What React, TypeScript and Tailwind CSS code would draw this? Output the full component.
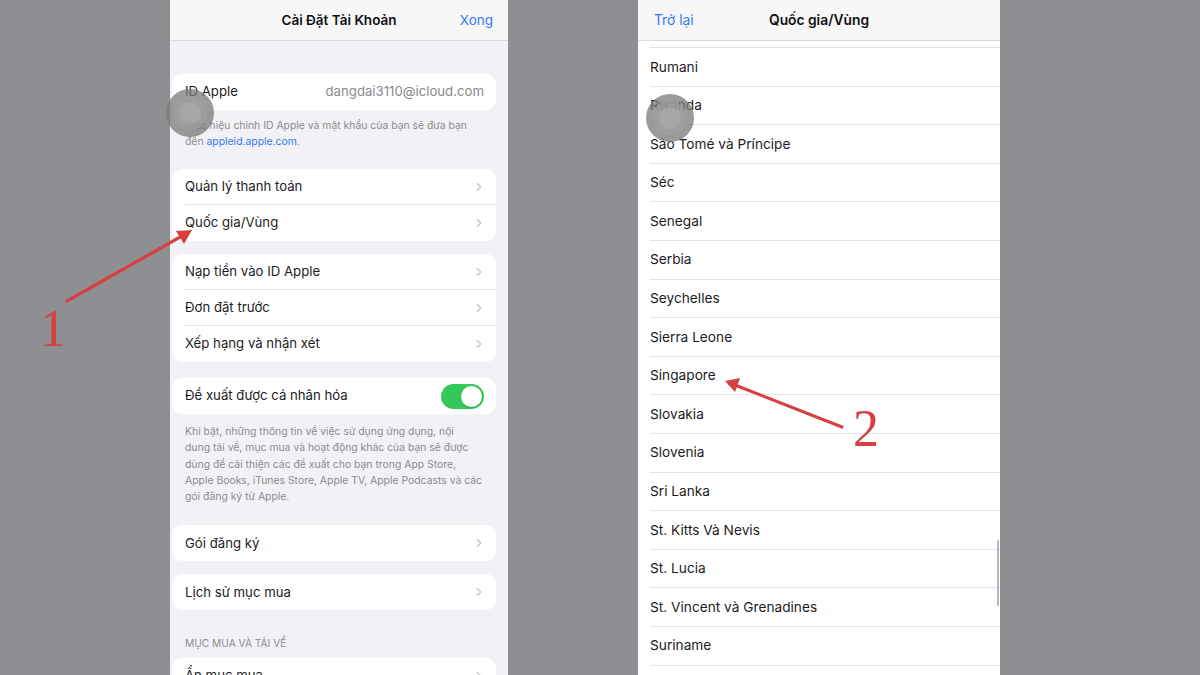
import { ChevronRight } from 'lucide-react';

const font = { fontFamily: 'Inter, "Noto Sans", sans-serif' };

const countries = [
  'Rumani',
  'Rwanda',
  'São Tomé và Príncipe',
  'Séc',
  'Senegal',
  'Serbia',
  'Seychelles',
  'Sierra Leone',
  'Singapore',
  'Slovakia',
  'Slovenia',
  'Sri Lanka',
  'St. Kitts Và Nevis',
  'St. Lucia',
  'St. Vincent và Grenadines',
  'Suriname',
];

function Row({ label, last }: { label: string; last?: boolean }) {
  return (
    <div className="pl-[13px] h-9">
      <div
        className={`h-full flex items-center justify-between pr-[10px] ${
          last ? '' : 'border-b border-[#e4e4e8]'
        }`}
      >
        <span className="text-[13.2px] text-[#1c1c1e]">{label}</span>
        <ChevronRight className="w-[14px] h-[14px] text-[#c2c2c6]" strokeWidth={2} />
      </div>
    </div>
  );
}

function Card({ children, className = '' }: { children: React.ReactNode; className?: string }) {
  return (
    <div className={`shrink-0 ml-[2px] mr-[12px] bg-white rounded-[10px] overflow-hidden ${className}`}>
      {children}
    </div>
  );
}

function TouchDot({ className }: { className: string }) {
  return (
    <div
      className={`absolute w-[48px] h-[48px] rounded-full bg-[#7a7a7a]/75 flex items-center justify-center ${className}`}
    >
      <div className="w-[34px] h-[34px] rounded-full bg-[#a0a0a0]/70 flex items-center justify-center">
        <div className="w-[22px] h-[22px] rounded-full bg-[#acacac]/60" />
      </div>
    </div>
  );
}

function AccountSettings() {
  return (
    <div className="w-[338px] h-full bg-[#f2f2f6] overflow-hidden flex flex-col shrink-0">
      <div className="h-[41px] shrink-0 bg-[#f7f7f8] border-b border-[#dcdce0] flex items-center justify-center relative">
        <span className="text-[13.5px] font-semibold text-[#111]">Cài Đặt Tài Khoản</span>
        <span className="absolute right-[15px] text-[13.5px] text-[#3478f6]">Xong</span>
      </div>

      <Card className="mt-[33px]">
        <div className="h-9 pl-[13px] pr-[12px] flex items-center justify-between">
          <span className="text-[13.2px] text-[#1c1c1e]">ID Apple</span>
          <span className="text-[13.2px] text-[#8a8a8e]">dangdai3110@icloud.com</span>
        </div>
      </Card>
      <p className="shrink-0 pl-[15px] pt-[8px] text-[10.4px] leading-[16px] text-[#8a8a8e] whitespace-nowrap">
        Việc hiệu chỉnh ID Apple và mật khẩu của bạn sẽ đưa bạn
        <br />
        đến <span className="text-[#3478f6]">appleid.apple.com</span>.
      </p>

      <Card className="mt-[19px]">
        <Row label="Quản lý thanh toán" />
        <Row label="Quốc gia/Vùng" last />
      </Card>

      <Card className="mt-[13px]">
        <Row label="Nạp tiền vào ID Apple" />
        <Row label="Đơn đặt trước" />
        <Row label="Xếp hạng và nhận xét" last />
      </Card>

      <Card className="mt-[16px]">
        <div className="h-9 pl-[13px] pr-[12px] flex items-center justify-between">
          <span className="text-[13.2px] text-[#1c1c1e]">Đề xuất được cá nhân hóa</span>
          <div className="w-[43px] h-[25px] rounded-full bg-[#34c759] flex items-center justify-end p-[2px]">
            <div className="w-[21px] h-[21px] rounded-full bg-white shadow" />
          </div>
        </div>
      </Card>
      <p className="shrink-0 pl-[15px] pt-[10px] text-[10.4px] leading-[16.3px] text-[#8a8a8e] whitespace-nowrap">
        Khi bật, những thông tin về việc sử dụng ứng dụng, nội
        <br />
        dung tải về, mục mua và hoạt động khác của bạn sẽ được
        <br />
        dùng để cải thiện các đề xuất cho bạn trong App Store,
        <br />
        Apple Books, iTunes Store, Apple TV, Apple Podcasts và các
        <br />
        gói đăng ký từ Apple.
      </p>

      <Card className="mt-[20px]">
        <Row label="Gói đăng ký" last />
      </Card>

      <Card className="mt-[13px]">
        <Row label="Lịch sử mục mua" last />
      </Card>

      <p className="shrink-0 pl-[15px] mt-[26px] text-[10.2px] uppercase text-[#8a8a8e]">Mục mua và tải về</p>

      <Card className="mt-[6px]">
        <Row label="Ẩn mục mua" last />
      </Card>
    </div>
  );
}

function CountryList() {
  return (
    <div className="w-[362px] h-full bg-white overflow-hidden flex flex-col shrink-0 relative">
      <div className="h-[41px] shrink-0 bg-[#f7f7f8] border-b border-[#dcdce0] flex items-center justify-center relative">
        <span className="absolute left-[16px] text-[13.8px] text-[#3478f6]">Trở lại</span>
        <span className="text-[13.8px] font-semibold text-[#111]">Quốc gia/Vùng</span>
      </div>
      <div className="pl-[12px] shrink-0">
        <div className="h-[7px] border-b border-[#e4e4e8]" />
        {countries.map((c) => (
          <div key={c} className="h-[38.6px] flex items-center border-b border-[#e4e4e8]">
            <span className="text-[13.7px] text-[#1c1c1e]">{c}</span>
          </div>
        ))}
      </div>
      <div className="absolute right-[1px] top-[540px] w-[2px] h-[66px] rounded-full bg-[#b8b8bc]" />
    </div>
  );
}

export default function App() {
  return (
    <div className="relative w-[1200px] h-[675px] bg-[#8e8f93] overflow-hidden flex" style={font}>
      <div className="w-[170px] shrink-0" />
      <AccountSettings />
      <div className="w-[130px] shrink-0" />
      <CountryList />

      {/* touch indicators */}
      <TouchDot className="left-[166px] top-[89px]" />
      <TouchDot className="left-[646px] top-[94px]" />

      {/* annotation arrows */}
      <svg className="absolute inset-0 pointer-events-none" width="1200" height="675" viewBox="0 0 1200 675">
        <line x1="67" y1="301" x2="182" y2="236" stroke="#d64040" strokeWidth="3.2" strokeLinecap="round" />
        <polygon points="192,230 176,231 184,244" fill="#d64040" />
        <line x1="842" y1="427" x2="735" y2="385" stroke="#d64040" strokeWidth="3.2" strokeLinecap="round" />
        <polygon points="725,381 740,378 735,392" fill="#d64040" />
      </svg>
      <span
        className="absolute left-[40px] top-[303px] text-[52px] leading-none text-[#d64040]"
        style={{ fontFamily: '"Liberation Serif", serif' }}
      >
        1
      </span>
      <span
        className="absolute left-[853px] top-[403px] text-[52px] leading-none text-[#d64040]"
        style={{ fontFamily: '"Liberation Serif", serif' }}
      >
        2
      </span>
    </div>
  );
}
